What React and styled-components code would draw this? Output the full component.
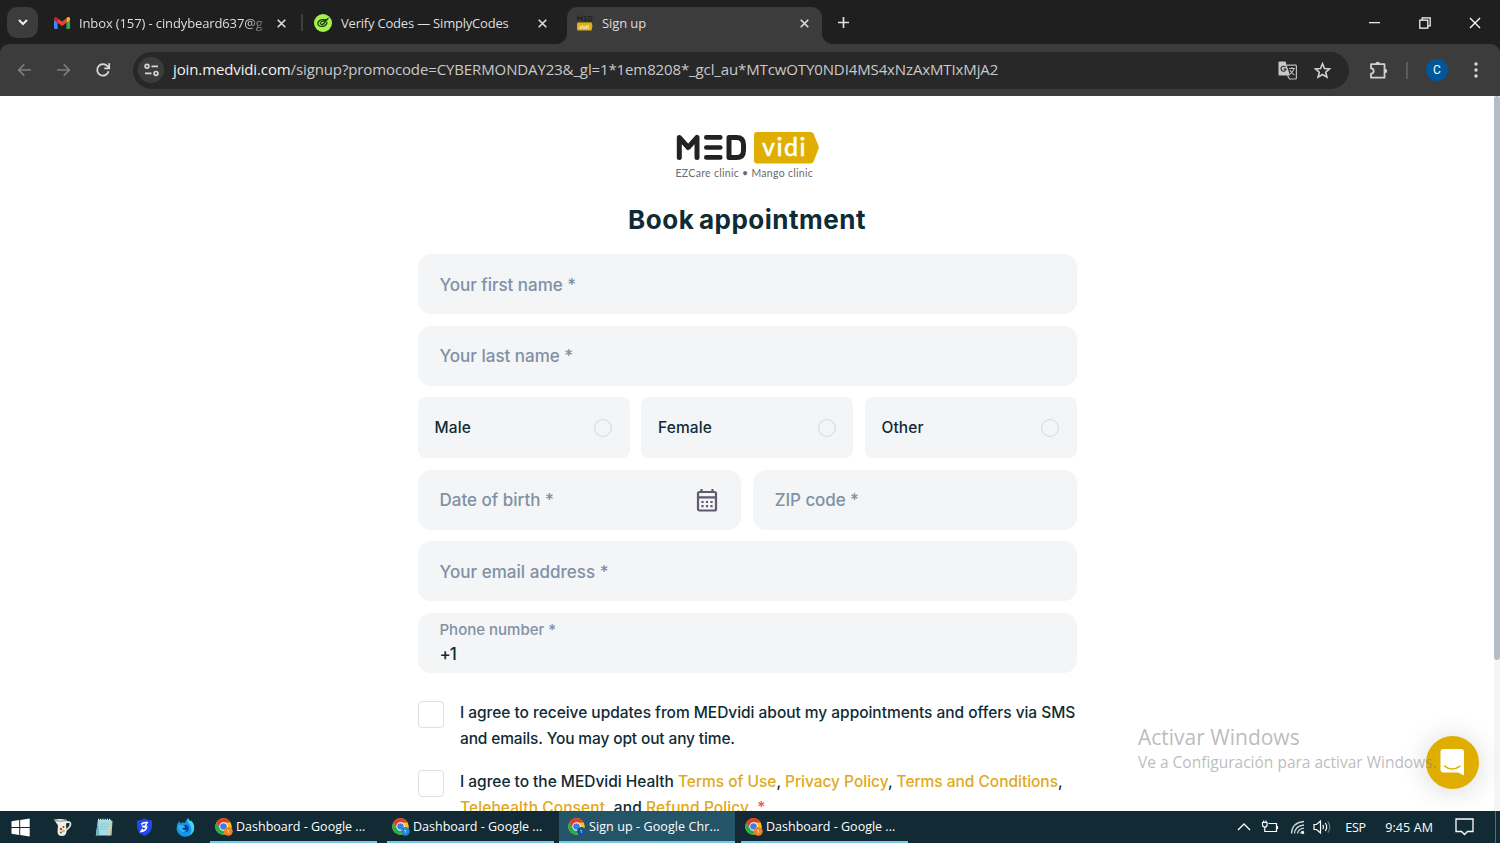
import styled, { createGlobalStyle, css } from 'styled-components';

const GlobalStyle = createGlobalStyle`
	* {
		box-sizing: border-box;
	}
	body {
		margin: 0;
		overflow: hidden;
	}
`;

const systemFont = css`
	font-family: 'Open Sans', 'Noto Sans', sans-serif;
`;

const Screen = styled.div`
	display: flex;
	flex-direction: column;
	width: 1500px;
	height: 843px;
	background: #1f1f1f;
	${systemFont}
`;

/* Line of text with a fixed tracking, so it keeps to the width of its slot */
const Text = styled.span`
	white-space: nowrap;
	letter-spacing: ${(props) => props.$track || 0}px;
`;

/* ---------- Tab strip ---------- */

const TabStrip = styled.div`
	display: flex;
	height: 44px;
	padding: 7px 0 0 7px;
	color: #dedede;
	font-size: 13px;
`;

const TabSearch = styled.button`
	display: grid;
	place-items: center;
	width: 31px;
	height: 31px;
	padding: 0;
	border: 0;
	border-radius: 10px;
	background: #3c3c3c;
`;

const Tab = styled.div`
	position: relative;
	display: flex;
	align-items: center;
	width: ${(props) => props.$width}px;
	height: 37px;
	padding: 0 ${(props) => props.$end}px 5px 10px;
	margin-left: ${(props) => props.$offset || 0}px;
	border-radius: 10px 10px 0 0;
	background: ${(props) => (props.$active ? '#3c3c3c' : 'transparent')};
	svg {
		flex: none;
	}
	${(props) =>
		props.$active &&
		css`
			&::before,
			&::after {
				content: '';
				position: absolute;
				bottom: 0;
				width: 10px;
				height: 10px;
			}
			&::before {
				left: -10px;
				background: radial-gradient(circle at 0 0, transparent 9.5px, #3c3c3c 10px);
			}
			&::after {
				right: -10px;
				background: radial-gradient(circle at 100% 0, transparent 9.5px, #3c3c3c 10px);
			}
		`}
`;

const TabTitle = styled(Text)`
	flex: 1;
	margin-left: 9px;
	${(props) => props.$fade && 'mask-image: linear-gradient(90deg, #000 85%, transparent 96%);'}
`;

const TabDivider = styled.div`
	width: 2px;
	height: 17px;
	margin-top: 7px;
	background: #3f3f3f;
`;

const NewTab = styled.div`
	margin: 9px auto 0 15px;
	line-height: 0;
`;

const WindowButtons = styled.div`
	display: flex;
	height: 31px;
	margin-right: -0.5px;
`;

const WindowButton = styled.div`
	display: grid;
	place-items: center;
	width: 50.5px;
`;

/* ---------- Toolbar ---------- */

const Toolbar = styled.div`
	display: flex;
	align-items: center;
	height: 52px;
	padding: 0 16px;
	border-radius: 9px 9px 0 0;
	background: #3c3c3c;
	svg {
		display: block;
		flex: none;
	}
`;

const NavButtons = styled.div`
	display: flex;
	align-items: center;
	gap: 21.5px;
	width: 117px;
`;

const Omnibox = styled.div`
	display: flex;
	align-items: center;
	width: 1216px;
	height: 37px;
	padding: 0 18px 0 5px;
	border-radius: 19px;
	background: #282828;
	color: #c9c9c9;
	font-size: 15px;
`;

const SiteInfo = styled.div`
	display: grid;
	place-items: center;
	width: 26px;
	height: 26px;
	margin-right: 9px;
	border-radius: 50%;
	background: #3c3c3c;
`;

const Url = styled(Text)`
	flex: 1;
	padding-bottom: 2px;
	b {
		color: #f1f1f1;
		font-weight: 400;
	}
`;

const OmniboxActions = styled.div`
	display: flex;
	align-items: center;
	gap: 17.5px;
`;

const Extensions = styled.div`
	margin-left: 20px;
`;

const ToolbarDivider = styled.div`
	width: 2px;
	height: 17px;
	margin: 0 18px 0 18px;
	background: #5b5b5b;
`;

const Avatar = styled.div`
	display: grid;
	place-items: center;
	width: 22px;
	height: 22px;
	margin-right: 26px;
	border-radius: 50%;
	background: #01579b;
	color: #fff;
	font-family: Roboto, sans-serif;
	font-size: 12px;
`;

/* ---------- Page ---------- */

const Viewport = styled.div`
	position: relative;
	display: flex;
	height: 715px;
	overflow: hidden;
	background: #fff;
`;

const Page = styled.main`
	display: flex;
	flex-direction: column;
	align-items: center;
	width: 1494px;
	color: #0f2b35;
	font-family: Inter, 'Open Sans', sans-serif;
	font-weight: 500;
`;

const ScrollTrack = styled.div`
	width: 6px;
	background: #f5f5f5;
`;

const ScrollThumb = styled.div`
	height: 564px;
	border-radius: 3px;
	background: #b4bcc8;
`;

const Brand = styled.div`
	width: 143px;
	height: 84px;
	padding-top: 34.5px;
	svg {
		display: block;
	}
`;

const Tagline = styled(Text)`
	display: block;
	margin-top: 3.5px;
	color: #6b6b6b;
	font-family: Lato, sans-serif;
	font-size: 10.5px;
	font-weight: 400;
	line-height: 13px;
`;

const Title = styled.h1`
	margin: 22px 0 0;
	font-size: 26px;
	font-weight: 700;
	line-height: 36px;
	white-space: nowrap;
	letter-spacing: 0.5px;
	word-spacing: -2px;
`;

const Form = styled.form`
	display: flex;
	flex-direction: column;
	gap: 11.5px;
	width: 659px;
	margin-top: 16px;
`;

const Row = styled.div`
	display: flex;
	gap: 11.5px;
`;

const Field = styled.label`
	display: flex;
	flex: 1;
	align-items: center;
	justify-content: space-between;
	min-height: 60px;
	padding: 1px 23px 0 22px;
	border-radius: 13px;
	background: #f3f5f7;
	color: #8090a5;
	font-size: 17px;
`;

const PhoneField = styled(Field)`
	flex-direction: column;
	align-items: flex-start;
	justify-content: flex-start;
	padding-top: 7px;
	font-size: 15px;
	line-height: 20px;
`;

const PhoneValue = styled(Text)`
	margin-top: 4px;
	color: #0f2b35;
	font-size: 17px;
`;

const Choice = styled.label`
	display: flex;
	flex: 1;
	align-items: center;
	justify-content: space-between;
	height: 61px;
	padding: 0 17.5px 0 17px;
	border-radius: 8px;
	background: #f3f5f7;
	font-size: 15.5px;
`;

const Radio = styled.span`
	width: 18px;
	height: 18px;
	border: 1px solid #d5d8dc;
	border-radius: 50%;
`;

const Consents = styled.div`
	display: flex;
	flex-direction: column;
	gap: 17px;
	margin-top: 15.5px;
`;

const Consent = styled.label`
	display: flex;
	gap: 16px;
	font-size: 15.5px;
	line-height: 26px;
`;

const Checkbox = styled.span`
	flex: none;
	width: 26.5px;
	height: 26.5px;
	margin-top: 1.5px;
	border: 1px solid #dcdfe3;
	border-radius: 4px;
`;

const ConsentText = styled.div`
	display: flex;
	flex-direction: column;
	a {
		color: #dfa91b;
	}
	i {
		color: #f0584c;
		font-style: normal;
	}
`;

const Watermark = styled.div`
	position: absolute;
	z-index: 2;
	top: 627px;
	left: 1138px;
	display: flex;
	flex-direction: column;
	color: rgba(130, 130, 130, 0.55);
	font-size: 15.5px;
	line-height: 22px;
`;

const WatermarkTitle = styled(Text)`
	font-size: 21px;
	line-height: 28px;
`;

const ChatButton = styled.div`
	position: absolute;
	top: 640px;
	left: 1426px;
	width: 53px;
	height: 53px;
	border-radius: 50%;
	background: #e0ae00;
	box-shadow: 0 2px 28px rgba(0, 0, 0, 0.16);
`;

const ChatGlyph = styled.div`
	position: absolute;
	z-index: 3;
	top: 653px;
	left: 1440px;
	line-height: 0;
`;

/* ---------- Taskbar ---------- */

const Taskbar = styled.div`
	display: flex;
	height: 32px;
	background: #112a33;
	color: #fff;
	font-size: 12.5px;
	svg {
		display: block;
		flex: none;
	}
`;

const Pinned = styled.div`
	display: flex;
	align-items: center;
	gap: 23.2px;
	width: 210px;
	padding-left: 10.5px;
`;

const Task = styled.div`
	display: flex;
	align-items: center;
	gap: 3px;
	width: ${(props) => props.$width}px;
	height: 32px;
	margin-right: ${(props) => props.$gap}px;
	padding: 1px 0 0 ${(props) => props.$inset}px;
	border-bottom: 2px solid #76c9e8;
	background: ${(props) => (props.$active ? '#245468' : 'transparent')};
`;

const Tray = styled.div`
	display: flex;
	align-items: center;
	margin: 0 4px 0 auto;
	padding-right: 3px;
	border-right: 1px solid #5b6c73;
`;

const TrayItem = styled.div`
	margin-right: ${(props) => props.$gap}px;
`;

const Cross = ({ size = 9, width = 1.8, color = '#dedede' }) => (
	<svg width={size} height={size} viewBox='0 0 10 10' stroke={color} strokeWidth={width}>
		<path d='M.8.8l8.4 8.4M9.2.8L.8 9.2' />
	</svg>
);

const Arrow = ({ flip }) => (
	<svg width='17.500' height='18' viewBox='0 0 18 18' fill='none' stroke='#7d7d7d' strokeWidth='1.7'>
		<path d={flip ? 'M2 9h12.500M9 3.200L14.800 9 9 14.800' : 'M15.500 9H3M8.500 3.200L2.700 9l5.800 5.800'} />
	</svg>
);

const GmailIcon = () => (
	<svg width='16' height='16' viewBox='0 0 16 16'>
		<path fill='#4285f4' d='M0 4l3.600 2.600V14H1.100A1.100 1.100 0 0 1 0 12.900z' />
		<path fill='#34a853' d='M12.400 6.600L16 4v8.900a1.100 1.100 0 0 1-1.100 1.100h-2.500z' />
		<path fill='#fbbc04' d='M12.400 3.200l1.200-.9C14.600 1.600 16 2.300 16 3.600V5l-3.600 2.700z' />
		<path fill='#c5221f' d='M0 5V3.600c0-1.300 1.400-2 2.400-1.300l1.200.9v4.500z' />
		<path fill='#ea4335' d='M3.600 7.700V3.200L8 6.500l4.400-3.300v4.500L8 11z' />
	</svg>
);

const SimplyCodesIcon = () => (
	<svg width='18' height='18' viewBox='0 0 18 18' fill='none'>
		<circle cx='9' cy='9' r='9' fill='#a4f24b' />
		<g stroke='#1d3b12' strokeWidth='1.300' strokeLinecap='round'>
			<path d='M10.500 5.800C7 4.800 3.800 7 3.800 9.500c0 4 8.200 4 9.200-1.200' />
			<path d='M6.300 9.200c1 2 2.500 1.500 3.500.3l4.300-5.200M7 8c2-.8 3.500-.8 5-2.500' />
		</g>
	</svg>
);

const badgeFont = { fontFamily: 'Lato, sans-serif', fill: '#fff' };

const MedvidiFavicon = () => (
	<svg width='16' height='16' viewBox='0 0 16 16'>
		<g fill='none' stroke='#222' strokeWidth='1.2'>
			<path d='M.6 6V1.500L3 4l2.300-2.500V6M7 1.500h3M7 3.600h3M7 5.700h3M11.800 1.600h1.700c2 0 2 4 0 4h-1.700z' />
		</g>
		<path fill='#e3b10b' d='M1 7.500h13.500L15.500 11l-1 4.500H1Q0 15.500 0 14.500v-6q0-1 1-1z' />
		<text x='2' y='13.800' fontSize='6.500' {...badgeFont}>
			vidi
		</text>
	</svg>
);

const SiteInfoIcon = () => (
	<svg width='15' height='14' viewBox='0 0 15 14' fill='none' stroke='#d6d6d6' strokeWidth='1.700'>
		<circle cx='3' cy='3.300' r='1.900' />
		<path d='M7.500 3.300H14M1 10.400h6.500' />
		<circle cx='12' cy='10.400' r='1.900' />
	</svg>
);

const ReloadIcon = () => (
	<svg width='17' height='16' viewBox='-1 0 17 16' fill='none' stroke='#dadada' strokeWidth='1.800'>
		<path d='M13.600 9.300A5.800 5.800 0 1 1 12.500 4.200L14 5.800' />
		<path d='M14.200 1.300v5H9.300' />
	</svg>
);

const TranslateIcon = () => (
	<svg width='19' height='19' viewBox='0 0 19 19'>
		<path fill='#c8c8c8' d='M1.500.5h6L12 14.500H1.500Q.5 14.500.5 13.500v-12q0-1 1-1z' />
		<path fill='none' stroke='#bdbdbd' strokeWidth='1.200' d='M9 4.200h8.500q.9 0 .9.900v12q0 .9-.9.900h-6L9.500 14.500' />
		<path fill='none' stroke='#303030' strokeWidth='1.200' d='M7.500 6.200A2.500 2.500 0 1 0 8 8.200H5.600' />
		<path fill='none' stroke='#bdbdbd' strokeWidth='1.100' d='M11 7.500h6M14 6v1.500M16 7.500c-.5 2.500-2 4.300-4 5.500M12 9c.8 2 2.500 4 4.500 5' />
	</svg>
);

const StarIcon = () => (
	<svg width='17' height='17' viewBox='0 0 17 17' fill='none' stroke='#d2d2d2' strokeWidth='1.600'>
		<path d='M8.500 1.800l2 4.700 5 .4-3.800 3.300 1.200 4.900-4.400-2.600-4.400 2.600 1.200-4.900L1.500 6.900l5-.4z' />
	</svg>
);

const PuzzleIcon = () => (
	<svg width='19' height='19' viewBox='0 0 19 19'>
		<path
			fill='none'
			stroke='#cfcfcf'
			strokeWidth='1.800'
			strokeLinejoin='round'
			d='M2 3.200h13.500v13.500H2v-4q2.700-.2 2.700-2.700T2 7.300z'
		/>
		<path fill='#cfcfcf' d='M6.500 3a2.200 2.200 0 0 1 4.400 0zM16 7.700a2.200 2.200 0 0 1 0 4.400z' />
	</svg>
);

const MedvidiLogo = () => (
	<svg width='143' height='33' viewBox='0 0 143 33'>
		<g fill='none' stroke='#222' strokeWidth='5' strokeLinecap='round' strokeLinejoin='round'>
			<path d='M3.300 26.500V6.500L12.200 16.500 21 6.500v20' />
			<path d='M30.300 6.400h14M30.300 16.500h14M30.300 26.400h14' strokeWidth='4.600' />
			<path d='M53 6.400h7.500q7 0 7 7v6q0 7-7 7H53z' />
		</g>
		<path fill='#e0ae00' d='M81 1h53.500q2 0 3 1.600l5 12.400q.6 1.500 0 3l-5 12.700q-.9 1.800-3 1.800H81q-3 0-3-3V4q0-3 3-3z' />
		<text x='86' y='24.500' fontSize='25' textLength='43.500' stroke='#fff' strokeWidth='.4' {...badgeFont}>
			vidi
		</text>
	</svg>
);

const CalendarIcon = () => (
	<svg width='22' height='25' viewBox='0 0 22 25' fill='none' stroke='#5f5a70'>
		<rect x='2' y='4' width='18' height='18.500' rx='1.500' strokeWidth='2.200' />
		<path strokeWidth='2.200' d='M2 9.300h18M5.500 1v3M16.500 1v3' />
		<path strokeWidth='2.200' strokeDasharray='2.200 2.300' d='M5.400 14h11.500M5.400 18.200h11.500' />
	</svg>
);

const ChatIcon = () => (
	<svg width='25' height='27' viewBox='0 0 25 27'>
		<path fill='#fff' d='M3.500 0h17.500q3 0 3 3v23.500L18 23.500H3.500q-3 0-3-3V3q0-3 3-3z' />
		<path d='M4.500 17.200q7.700 5.800 15.500 0' fill='none' stroke='#e0ae00' strokeWidth='1.500' strokeLinecap='round' />
	</svg>
);

const WindowsIcon = () => (
	<svg width='19' height='19' viewBox='0 0 19 19' fill='#fff'>
		<path d='M.5 3.200l7.700-1.100V9H.5zM9.200 2L18.700.5V9H9.200zM.5 10h7.700v6.900L.5 15.800zM9.200 10h9.500v8.500L9.200 17z' />
	</svg>
);

const JugIcon = () => (
	<svg width='19' height='19' viewBox='0 0 19 19'>
		<path d='M12.500 4.500q5-1.500 5 1.500t-5 6.500' fill='none' stroke='#e4dfd3' strokeWidth='1.800' />
		<path fill='#f1ede3' d='M1 1.500Q8 .5 14 2l-1 5 .5 6.500q-.5 4.500-4.500 4.500-4.500 0-4.500-4.500l.5-6z' />
		<path d='M1.500 2.500q6 1.500 12 0' fill='none' stroke='#8a8479' />
		<circle cx='8' cy='11' r='1.300' fill='#c14a35' />
		<circle cx='10.500' cy='13' r='1.200' fill='#e2a234' />
		<circle cx='8' cy='14.500' r='1.100' fill='#49804a' />
		<circle cx='10.500' cy='9' r='1' fill='#4b5a80' />
	</svg>
);

const NotepadIcon = () => (
	<svg width='18' height='18' viewBox='0 0 18 18'>
		<path fill='#d9c79b' d='M15 2l2.500 1-1 14.500H13z' />
		<path fill='#a9dce6' d='M3 2h13l-2 15.500H.8z' />
		<path fill='#6fb4c6' d='M.8 17.500L3 2l1.500 14.500z' />
		<path stroke='#e8f6f8' strokeWidth='1.500' strokeDasharray='1.200 1' d='M3 1.500h13' />
		<path stroke='#79b8c6' strokeWidth='.6' d='M5 6h9M5 8.500h8.500M4.500 11h8.500' />
	</svg>
);

const ShieldIcon = () => (
	<svg width='17' height='18' viewBox='0 0 17 18'>
		<path fill='#2148e8' d='M1 2.500q4 0 7.500-2 3.500 2 7.500 2v6q0 6-7.500 9.500Q1 14.500 1 8.500z' />
		<path d='M5.200 6.500q2-2.500 5.800-2L9.500 8l-3.700.6M7.500 9h3.200q-.7 3.800-5.700 4.500l1.800-2.500' fill='none' stroke='#fff' strokeWidth='1.500' />
	</svg>
);

const FirefoxIcon = () => (
	<svg width='19' height='19' viewBox='0 0 19 19'>
		<path fill='#1497e8' d='M1 8Q1 5.500 3.500 3l1 2.500Q7 4 9 5q.5-3 3-5 .5 2 2.500 3.500l.5-1q3 3 3 7a8.700 8.700 0 0 1-17.500 1z' />
		<path fill='#43d3f5' d='M12 0q.5 2 2.500 3.500l.5-1q4 4 3 9-.8 4-4.500 6 3-4 1.500-8-1-3.500-3-5-1-2 0-4.500z' />
		<circle cx='9' cy='10.500' r='3.800' fill='#163a9e' />
		<path fill='#28b9f2' d='M2 8q4-2 7 0 0 2-3 2 1 3 5 2-2 3-5.500 1.500Q2.500 12 2 8z' />
	</svg>
);

const ChromeIcon = ({ badge }) => (
	<svg width='18' height='18' viewBox='0 0 18 18'>
		<circle cx='8.500' cy='8.500' r='8.300' fill='#fbc116' />
		<path fill='#e33b2e' d='M1.300 4.400a8.300 8.300 0 0 1 14.400 0H8.500L5 10.500z' />
		<path fill='#2da94f' d='M1.300 4.400L5 10.500h7l-3.600 6.300A8.300 8.300 0 0 1 1.300 4.400z' />
		<circle cx='8.500' cy='8.500' r='4.200' fill='#fff' />
		<circle cx='8.500' cy='8.500' r='3.300' fill='#3b7ded' />
		<circle cx='13.300' cy='13.300' r='4.400' fill={badge} />
		<path d='M12 12.500h2M13.500 12.500v2.500' stroke='#fff' strokeOpacity='.5' />
	</svg>
);

const PlugIcon = () => (
	<svg width='18' height='16' viewBox='0 0 18 16' fill='none' stroke='#fff' strokeWidth='1.200'>
		<path d='M7.500 4.500h8v8H6M16.500 7v3' />
		<path d='M1.500 3.500h4.500v2.500q0 2-2.200 2T1.500 6zM2.700 1.500v2M5 1.500v2M3.800 8v4.500H6' />
	</svg>
);

const WifiIcon = () => (
	<svg width='16' height='16' viewBox='0 0 16 16' fill='none' stroke='#cfd6d8' strokeWidth='1.300'>
		<path d='M1.500 14.500Q2 3.500 14 2.500M4.500 14.500Q5 7 14 6M7.500 14.500Q8 10 14 9.200' />
		<path d='M10.500 14.500q.5-2 3-2.300' />
		<circle cx='12.800' cy='13.700' r='1.400' fill='#fff' stroke='none' />
	</svg>
);

const VolumeIcon = () => (
	<svg width='18' height='16' viewBox='0 0 18 16' fill='none' stroke='#fff' strokeWidth='1.200'>
		<path d='M1 5.500h2.500L7.500 2v12l-4-3.500H1zM9.800 5.800q1.500 2.200 0 4.400M12.300 4q2.800 4 0 8' />
		<path d='M14.800 2.300q4 5.700 0 11.400' stroke='#67777d' />
	</svg>
);

const BrowserTabs = () => (
	<TabStrip>
		<TabSearch>
			<svg width='10' height='7' viewBox='0 0 10 7' fill='none' stroke='#f0f0f0' strokeWidth='2'>
				<path d='M1 1l4 4 4-4' />
			</svg>
		</TabSearch>
		<Tab $width={257} $offset={6} $end={15}>
			<GmailIcon />
			<TabTitle $fade $track={-0.12}>
				Inbox (157) - cindybeard637@g
			</TabTitle>
			<Cross />
		</Tab>
		<TabDivider />
		<Tab $width={254} $offset={1} $end={11}>
			<SimplyCodesIcon />
			<TabTitle $track={-0.2}>Verify Codes — SimplyCodes</TabTitle>
			<Cross />
		</Tab>
		<Tab $width={255} $offset={9} $end={13} $active>
			<MedvidiFavicon />
			<TabTitle $track={-0.1}>Sign up</TabTitle>
			<Cross />
		</Tab>
		<NewTab>
			<svg width='13' height='13' viewBox='0 0 13 13' stroke='#dedede' strokeWidth='1.700'>
				<path d='M6.500 1v11M1 6.500h11' />
			</svg>
		</NewTab>
		<WindowButtons>
			<WindowButton>
				<svg width='11' height='2' viewBox='0 0 11 2'>
					<path fill='#e8e8e8' d='M0 0h11v1.300H0z' />
				</svg>
			</WindowButton>
			<WindowButton>
				<svg width='12' height='12' viewBox='0 0 12 12' fill='none' stroke='#fff' strokeWidth='1.200'>
					<path d='M.8 3.200h8v8h-8zM3.200 3V.800h8v8H9' />
				</svg>
			</WindowButton>
			<WindowButton>
				<Cross size={12} width={1.1} color='#fff' />
			</WindowButton>
		</WindowButtons>
	</TabStrip>
);

const AddressBar = () => (
	<Toolbar>
		<NavButtons>
			<Arrow />
			<Arrow flip />
			<ReloadIcon />
		</NavButtons>
		<Omnibox>
			<SiteInfo>
				<SiteInfoIcon />
			</SiteInfo>
			<Url $track={-0.12}>
				<b>join.medvidi.com</b>
				/signup?promocode=CYBERMONDAY23&_gl=1*1em8208*_gcl_au*MTcwOTY0NDI4MS4xNzAxMTIxMjA2
			</Url>
			<OmniboxActions>
				<TranslateIcon />
				<StarIcon />
			</OmniboxActions>
		</Omnibox>
		<Extensions>
			<PuzzleIcon />
		</Extensions>
		<ToolbarDivider />
		<Avatar>C</Avatar>
		<svg width='4' height='16' viewBox='0 0 4 16' fill='#dadada'>
			<circle cx='2' cy='2' r='1.700' />
			<circle cx='2' cy='8' r='1.700' />
			<circle cx='2' cy='14' r='1.700' />
		</svg>
	</Toolbar>
);

const SignupForm = () => (
	<Form>
		<Field>
			<Text $track={-0.04}>Your first name *</Text>
		</Field>
		<Field>
			<Text>Your last name *</Text>
		</Field>
		<Row>
			{['Male', 'Female', 'Other'].map((name) => (
				<Choice key={name}>
					<Text $track={0.1}>{name}</Text>
					<Radio />
				</Choice>
			))}
		</Row>
		<Row>
			<Field>
				<Text>Date of birth *</Text>
				<CalendarIcon />
			</Field>
			<Field>
				<Text $track={-0.08}>ZIP code *</Text>
			</Field>
		</Row>
		<Field>
			<Text $track={0.04}>Your email address *</Text>
		</Field>
		<PhoneField>
			<Text>Phone number *</Text>
			<PhoneValue $track={-1}>+1</PhoneValue>
		</PhoneField>
		<Consents>
			<Consent>
				<Checkbox />
				<ConsentText>
					<Text $track={-0.035}>I agree to receive updates from MEDvidi about my appointments and offers via SMS</Text>
					<Text $track={-0.14}>and emails. You may opt out any time.</Text>
				</ConsentText>
			</Consent>
			<Consent>
				<Checkbox />
				<ConsentText>
					<Text $track={-0.03}>
						I agree to the MEDvidi Health <a>Terms of Use</a>, <a>Privacy Policy</a>, <a>Terms and Conditions</a>,
					</Text>
					<Text $track={0.09}>
						<a>Telehealth Consent</a>, and <a>Refund Policy</a>. <i>*</i>
					</Text>
				</ConsentText>
			</Consent>
		</Consents>
	</Form>
);

const tasks = [
	{ title: 'Dashboard - Google ...', badge: '#f5811f', width: 167, gap: 10, inset: 5, track: 0 },
	{ title: 'Dashboard - Google ...', badge: '#1e88d2', width: 167, gap: 5, inset: 5, track: 0 },
	{ title: 'Sign up - Google Chr...', badge: '#12559b', width: 176, gap: 6, inset: 9, track: 0.1, active: true },
	{ title: 'Dashboard - Google ...', badge: '#f5811f', width: 167, gap: 0, inset: 4, track: 0 },
];

const WindowsTaskbar = () => (
	<Taskbar>
		<Pinned>
			<WindowsIcon />
			<JugIcon />
			<NotepadIcon />
			<ShieldIcon />
			<FirefoxIcon />
		</Pinned>
		{tasks.map((task, i) => (
			<Task key={i} $width={task.width} $gap={task.gap} $inset={task.inset} $active={task.active}>
				<ChromeIcon badge={task.badge} />
				<Text $track={task.track}>{task.title}</Text>
			</Task>
		))}
		<Tray>
			<TrayItem $gap={10}>
				<svg width='14' height='8' viewBox='0 0 14 8' fill='none' stroke='#fff' strokeWidth='1.300'>
					<path d='M1 7l6-6 6 6' />
				</svg>
			</TrayItem>
			<TrayItem $gap={11}>
				<PlugIcon />
			</TrayItem>
			<TrayItem $gap={7}>
				<WifiIcon />
			</TrayItem>
			<TrayItem $gap={14}>
				<VolumeIcon />
			</TrayItem>
			<TrayItem $gap={19.5}>
				<Text $track={-0.3}>ESP</Text>
			</TrayItem>
			<TrayItem $gap={22}>
				<Text $track={0.1}>9:45 AM</Text>
			</TrayItem>
			<TrayItem $gap={18}>
				<svg width='19' height='18' viewBox='0 0 19 18' fill='none' stroke='#fff' strokeWidth='1.300'>
					<path d='M1 1h17v12.500h-5.500l-3 3-3-3H1z' />
				</svg>
			</TrayItem>
		</Tray>
	</Taskbar>
);

const App = () => (
	<Screen>
		<GlobalStyle />
		<BrowserTabs />
		<AddressBar />
		<Viewport>
			<Page>
				<Brand>
					<MedvidiLogo />
					<Tagline $track={0.3}>EZCare clinic • Mango clinic</Tagline>
				</Brand>
				<Title>Book appointment</Title>
				<SignupForm />
			</Page>
			<ScrollTrack>
				<ScrollThumb />
			</ScrollTrack>
			<ChatButton />
			<Watermark>
				<WatermarkTitle>Activar Windows</WatermarkTitle>
				<Text>Ve a Configuración para activar Windows.</Text>
			</Watermark>
			<ChatGlyph>
				<ChatIcon />
			</ChatGlyph>
		</Viewport>
		<WindowsTaskbar />
	</Screen>
);

export default App;
